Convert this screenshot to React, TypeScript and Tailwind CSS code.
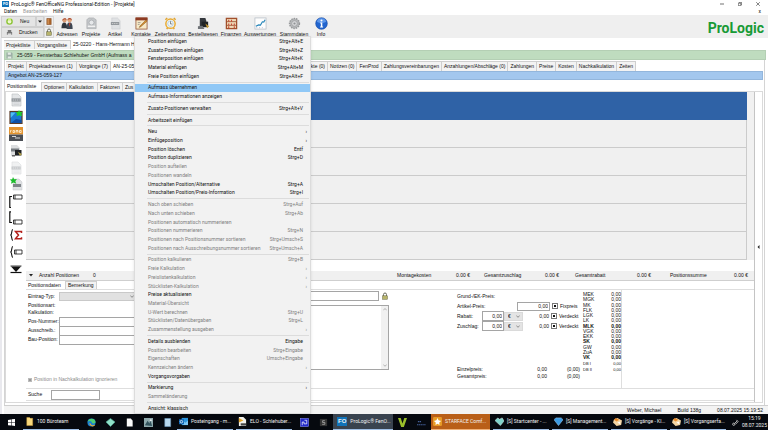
import { ReactNode } from 'react';
import clsx from 'clsx';

type MenuEntry = { label: string; keys?: string; off?: boolean; sub?: boolean; active?: boolean } | null;

const menu: MenuEntry[] = [
  { label: 'Position einfügen', keys: 'Strg+Alt+E' },
  { label: 'Zusatz-Position einfügen', keys: 'Strg+Alt+Z' },
  { label: 'Fensterposition einfügen', keys: 'Strg+Alt+K' },
  { label: 'Material einfügen', keys: 'Strg+Alt+M' },
  { label: 'Freie Position einfügen', keys: 'Strg+Alt+F' },
  null,
  { label: 'Aufmass übernehmen', active: true },
  { label: 'Aufmass-Informationen anzeigen' },
  null,
  { label: 'Zusatz-Positionen verwalten', keys: 'Strg+Alt+V' },
  null,
  { label: 'Arbeitszeit einfügen' },
  null,
  { label: 'Neu', sub: true },
  { label: 'Einfügeposition', sub: true },
  { label: 'Position löschen', keys: 'Entf' },
  { label: 'Position duplizieren', keys: 'Strg+D' },
  { label: 'Position aufteilen', off: true },
  { label: 'Positionen wandeln', off: true },
  { label: 'Umschalten Position/Alternative', keys: 'Strg+A' },
  { label: 'Umschalten Position/Preis-Information', keys: 'Strg+I' },
  null,
  { label: 'Nach oben schieben', keys: 'Strg+Auf', off: true },
  { label: 'Nach unten schieben', keys: 'Strg+Ab', off: true },
  { label: 'Positionen automatisch nummerieren', off: true },
  { label: 'Positionen nummerieren', keys: 'Strg+N', off: true },
  { label: 'Positionen nach Positionsnummer sortieren', keys: 'Strg+Umsch+S', off: true },
  { label: 'Positionen nach Ausschreibungsnummer sortieren', keys: 'Strg+Umsch+A', off: true },
  null,
  { label: 'Position kalkulieren', keys: 'Strg+B', off: true },
  { label: 'Freie Kalkulation', sub: true, off: true },
  { label: 'Preislistenkalkulation', sub: true, off: true },
  { label: 'Stücklisten-Kalkulation', sub: true, off: true },
  { label: 'Preise aktualisieren' },
  { label: 'Material-Übersicht', off: true },
  { label: 'U-Wert berechnen', keys: 'Strg+U', off: true },
  { label: 'Stücklisten/Datenübergaben', keys: 'Strg+L', off: true },
  { label: 'Zusammenstellung ausgeben', sub: true, off: true },
  null,
  { label: 'Details ausblenden', keys: 'Eingabe' },
  { label: 'Position bearbeiten', keys: 'Strg+Eingabe', off: true },
  { label: 'Eigenschaften', keys: 'Umsch+Eingabe', off: true },
  { label: 'Kennzeichen ändern', sub: true, off: true },
  { label: 'Vorgangsvorgaben' },
  null,
  { label: 'Markierung', sub: true },
  { label: 'Sammeländerung', off: true },
  null,
  { label: 'Ansicht: klassisch' },
];

const costs = ['MEK', 'MGK', 'MK', 'FLK', 'LGK', 'LK', 'MLK', 'VGK', 'EKK', 'SK', 'GW', 'ZuA', 'VK'];
const boldCosts = ['MLK', 'SK', 'VK'];

function Page({ className }: { className?: string }) {
  return (
    <svg viewBox="0 0 14 14" className={clsx('h-[14px] w-[14px]', className)}>
      <path d="M3 1h6l3 3v9H3z" fill="#e3e5e7" stroke="#b9bcc0" strokeWidth=".6" />
      <path d="M2.6 5.4h9v3.2h-9z" fill="#8b9095" />
      <path d="M3.6 7h7" stroke="#d8dadc" strokeWidth=".9" strokeDasharray="1.4 .6" />
      <path d="M4.5 10h6M4.5 11.5h6" stroke="#c3c6c9" strokeWidth=".5" />
    </svg>
  );
}

const toolIcons: { label: string; art: ReactNode }[] = [
  {
    label: 'Adressen',
    art: (
      <>
        <path d="M.5 12c0-4 1-6 3-6s3 2 3.2 6z" fill="#2e343c" />
        <path d="M6 13c0-5 1-7 3.3-7s3.2 2 3.2 7z" fill="#3d4652" />
        <path d="M8.4 6.6h1.8l-.9 4z" fill="#c8422e" />
        <circle cx="3.8" cy="3.8" r="2.2" fill="#d99b74" />
        <circle cx="9.3" cy="3.6" r="2.3" fill="#e0a57d" />
        <path d="M1.4 4C1 .8 6.4.4 6 3.2 4.5 2 3 2.4 1.4 4zM6.9 3.2c0-3 4.8-3 4.9 0-1.4-1.2-3.5-1.2-4.9 0z" fill="#a8452a" />
      </>
    ),
  },
  {
    label: 'Projekte',
    art: (
      <>
        <path d="M2 3l2-2h5l3 2v9.5H2z" fill="#c4c7ca" stroke="#9da1a5" strokeWidth=".6" />
        <circle cx="7" cy="6" r="2.7" fill="#e6e8ea" stroke="#9a9ea2" strokeWidth=".7" />
        <path d="M3 10h8" stroke="#f1f1f1" strokeWidth="1.5" />
      </>
    ),
  },
  {
    label: 'Artikel',
    art: (
      <>
        <path d="M3 1h6l3 3v9H3z" fill="#dfe1e3" stroke="#c2c5c8" strokeWidth=".5" />
        <path d="M2 5.5h9v3H2z" fill="#8b9095" />
        <path d="M3 7h7" stroke="#ddd" strokeWidth=".8" strokeDasharray="1.4 .6" />
      </>
    ),
  },
  {
    label: 'Kontakte',
    art: (
      <>
        <rect x="1" y="1" width="12" height="12" fill="#f6e9c8" stroke="#8d4a2a" strokeWidth=".8" />
        <path d="M.6.6h12.800v3H.6z" fill="#8d3a22" />
        <path d="M12 3L5.500 9.500l-1 1.700 1.800-.8L13 4.500z" fill="#d9912e" stroke="#5b3514" strokeWidth=".4" />
        <path d="M3 6h3M3 8h2" stroke="#6a6a6a" strokeWidth=".6" />
      </>
    ),
  },
  {
    label: 'Zeiterfassung',
    art: (
      <>
        <path d="M1.5 3l2-2M12.5 3l-2-2M3 13l1-2M11 13l-1-2" stroke="#e0a22d" strokeWidth="1.5" />
        <circle cx="7" cy="7.2" r="5" fill="#f3f6f4" stroke="#e9aa30" strokeWidth="1.6" />
        <circle cx="7" cy="7.2" r="3" fill="none" stroke="#9cc0d8" strokeWidth=".7" />
        <path d="M7 4.5v3h2" fill="none" stroke="#555" strokeWidth=".7" />
      </>
    ),
  },
  {
    label: 'Bestellwesen',
    art: (
      <>
        <path d="M3 1h6l1 3v6H3z" fill="#34383d" />
        <path d="M5 5h7v6H5z" fill="#202326" />
        <path d="M1 10l5-.500 2 3.500H1z" fill="#6f7378" />
        <path d="M9 7l4 3-2 2z" fill="#c79a31" />
      </>
    ),
  },
  {
    label: 'Finanzen',
    art: (
      <>
        <rect x="1.5" y="1.5" width="11" height="11" fill="#f0d9b8" stroke="#a2502c" strokeWidth="1.4" />
        <path d="M2 5h10M2 9h10" stroke="#8d4325" strokeWidth=".8" />
        <path d="M4 3v2M7 3v2M4 7v2M7 7v2M10 7v2M4 10v2M10 10v2" stroke="#c84a35" strokeWidth="1.2" />
      </>
    ),
  },
  {
    label: 'Auswertungen',
    art: (
      <>
        <rect x="1" y="1" width="12" height="12" fill="#fdfdfd" stroke="#b4bcc4" strokeWidth=".8" />
        <path d="M2 10l3-1.5 2 .2 2-3.500 1.500.3L12 3" fill="none" stroke="#2484b8" strokeWidth="1.2" />
        <path d="M3 12V11M6 12v-1M9 12v-1" stroke="#aac" strokeWidth=".8" />
      </>
    ),
  },
  {
    label: 'Stammdaten',
    art: (
      <>
        <circle cx="7" cy="7" r="5.3" fill="#b6b8ba" stroke="#96989a" strokeWidth="1.6" strokeDasharray="1.6 1" />
        <circle cx="7" cy="7" r="3" fill="#d7d8da" stroke="#8e9092" strokeWidth=".6" />
        <circle cx="7" cy="7" r="1.2" fill="#909294" />
      </>
    ),
  },
  {
    label: 'Info',
    art: (
      <>
        <circle cx="7" cy="7" r="6.3" fill="#2265cf" stroke="#1848a0" strokeWidth=".6" />
        <path d="M2 5a5.3 5.3 0 0 1 10 0c-3 2-7 2-10 0z" fill="#5d97ea" />
        <circle cx="7" cy="3.7" r="1.1" fill="#fff" />
        <path d="M5.6 6h2.300v4.200h.8v1H5.500v-1h.8V7h-.7z" fill="#fff" />
      </>
    ),
  },
];

const sideIcons: { name: string; art: ReactNode }[] = [
  { name: 'Artikel', art: <Page /> },
  {
    name: 'Fenster',
    art: (
      <svg viewBox="0 0 14 14" className="h-[14px] w-[14px]">
        <rect x="1" y="1.5" width="12" height="12" fill="#1b79d4" stroke="#5a3b26" strokeWidth="1.2" />
        <path d="M1.6 8l5-5.500H1.600z" fill="#4fc0f3" />
        <path d="M2 13l5-4 5.500 1v3z" fill="#0e4fa6" />
        <path d="M10 0l1.100 2.100 2.600-.3-1.500 2 1 2.400L10 5.300 7.400 6.200l.8-2.400L6.500 1.900l2.500.2z" fill="#20d02c" />
      </svg>
    ),
  },
  {
    name: 'Roma',
    art: (
      <svg viewBox="0 0 14 14" className="h-[14px] w-[14px]">
        <path d="M0 0h14v7.500H0z" fill="#e2932f" />
        <path d="M0 7.500h14V14H0z" fill="#4b4f55" />
        <path d="M1.500 5.500V3.500h1M4 3.500h1.500v2H4zM7 5.500v-2h1v2m0-2h1v2M10.500 3.500h1.700v2h-1.700z" fill="none" stroke="#fff4dc" strokeWidth=".8" />
        <path d="M3 9.500h4M6 11h5" stroke="#d4d6d8" />
      </svg>
    ),
  },
  {
    name: 'Bestellung',
    art: (
      <svg viewBox="0 0 14 14" className="h-[14px] w-[14px]">
        <path d="M2 1h6l3 3v8H2z" fill="#dcdee0" />
        <path d="M2 4.500h8v3H2z" fill="#777c81" />
        <path d="M6 6h6.500v5.500H6z" fill="#1e2124" />
        <path d="M9 8l4 2-2 2z" fill="#b2a04b" />
        <path d="M3 11h3v1.500H3z" fill="#666" />
      </svg>
    ),
  },
  { name: 'Artikel kopieren', art: <Page className="opacity-50" /> },
  {
    name: 'Artikel neu',
    art: (
      <svg viewBox="0 0 14 14" className="h-[14px] w-[14px]">
        <path d="M4 2h6l3 3v8H4z" fill="#dfe1e3" stroke="#c2c5c8" strokeWidth=".5" />
        <path d="M4 7h8v3H4z" fill="#80858a" />
        <path d="M4 0l1.200 2.300 2.700-.2-1.600 2.100 1 2.500L4.400 5.600 2 6.700l.6-2.500L.8 2.400l2.400-.1z" fill="#1dbd2c" />
      </svg>
    ),
  },
  {
    name: 'Gruppe Anfang',
    art: (
      <svg viewBox="0 0 14 14" className="h-[14px] w-[14px]" fill="none" stroke="#111">
        <path d="M3 2.500H.8v11H2" strokeWidth="1.200" />
        <path d="M4.500 1h8.500v4H4.500zM6 1v4" strokeWidth=".8" />
      </svg>
    ),
  },
  {
    name: 'Gruppe Ende',
    art: (
      <svg viewBox="0 0 14 14" className="h-[14px] w-[14px]" fill="none" stroke="#111">
        <path d="M2 .8H.8v10.700H3" strokeWidth="1.200" />
        <path d="M4.500 9h8.500v4H4.500zM6 9v4" strokeWidth=".8" />
      </svg>
    ),
  },
  {
    name: 'Summe',
    art: (
      <svg viewBox="0 0 14 14" className="h-[14px] w-[14px]" fill="none">
        <path d="M4 1.500C2 1.500 3.500 6.500 1.500 7c2 .5.5 5.500 2.500 5.500" stroke="#111" strokeWidth="1.100" />
        <path d="M12.500 5V3.500H6.500L9.500 7l-3 3.800h6V9.300" stroke="#b3201c" strokeWidth="1.500" />
      </svg>
    ),
  },
  {
    name: 'Klammer',
    art: (
      <svg viewBox="0 0 14 14" className="h-[14px] w-[14px]" fill="none" stroke="#111">
        <path d="M4 1.500C2 1.500 3.500 6.500 1.500 7c2 .5.5 5.500 2.500 5.500" strokeWidth="1.100" />
        <path d="M5.500 5h7.500v4H5.500zM7 5v4" strokeWidth=".8" />
      </svg>
    ),
  },
  {
    name: 'Nach unten',
    art: (
      <svg viewBox="0 0 14 14" className="h-[14px] w-[14px]">
        <path d="M1.500 4h11" stroke="#111" strokeWidth=".8" />
        <path d="M7 10L2 4.500h10z" fill="#111" />
        <path d="M1.500 10.500h11" stroke="#111" strokeWidth="1.200" />
      </svg>
    ),
  },
];

function Tab({ children, className, active }: { children: ReactNode; className?: string; active?: boolean }) {
  return (
    <button
      className={clsx(
        'shrink-0 overflow-hidden whitespace-nowrap border-r border-[#cfcfcf] px-[2px] text-left',
        active ? 'bg-white' : 'border-t bg-[#f3f3f3]',
        className,
      )}
    >
      {children}
    </button>
  );
}

function Lock() {
  return (
    <svg viewBox="0 0 8 8" className="h-2 w-2">
      <path d="M2.500 4V2.500a1.500 1.500 0 0 1 3 0V4" fill="none" stroke="#6b6b5c" />
      <rect x="1.500" y="3.800" width="5" height="3.500" fill="#b7b46a" stroke="#6b6b4c" strokeWidth=".5" />
    </svg>
  );
}

function ContextMenu() {
  return (
    <div
      role="menu"
      className="absolute top-9 bottom-4 left-[134px] z-10 flex w-[177px] flex-col border border-[#dcdcdc] bg-[#f2f2f2] font-['Roboto',sans-serif] shadow-sm"
    >
      {menu.map((m, i) =>
        m ? (
          <button
            key={i}
            role="menuitem"
            disabled={m.off}
            className={clsx(
              'flex min-h-0 flex-1 items-center pr-[3px] pl-[13px] text-[5px] leading-none',
              m.active && 'bg-[#90c8f6]',
              m.off ? 'text-[#808080]' : 'text-[#111]',
            )}
          >
            <span className="whitespace-nowrap">{m.label}</span>
            <span className="ml-auto whitespace-nowrap">{m.keys}</span>
            <span className="w-[4px] text-right">{m.sub ? '›' : ''}</span>
          </button>
        ) : (
          <div key={i} className="flex h-[3px] items-center pr-px pl-[12px]">
            <div className="h-px w-full bg-[#dcdcdc]" />
          </div>
        ),
      )}
    </div>
  );
}

function Field({ id, label }: { id: string; label: string }) {
  return (
    <div className="flex h-[9px] items-center">
      <label htmlFor={id} className="w-[31px] whitespace-nowrap">{label}</label>
      <input id={id} className="h-[10px] min-w-0 flex-1 border border-[#a5a5a5] bg-white px-1" />
    </div>
  );
}

function Check({ label }: { label: string }) {
  return (
    <label className="ml-[2px] flex items-center gap-[2px]">
      <input type="checkbox" className="h-[6px] w-[6px] appearance-none border border-[#777] bg-[#111] ring-1 ring-white ring-inset" />
      {label}
    </label>
  );
}

function PriceRow({ label, check }: { label: string; check: string }) {
  return (
    <div className="flex h-[10px] items-center">
      <label htmlFor={label} className="w-[25px]">{label}:</label>
      <input id={label} defaultValue="0,00" className="h-[10px] w-[22px] border border-[#a5a5a5] bg-white pr-px text-right" />
      <div className="relative flex items-center">
        <select aria-label={label + ' Einheit'} className="h-[9px] w-[19px] appearance-none border border-[#dadada] bg-[#e4e4e4] pl-[3px]">
          <option>€</option>
        </select>
        <svg viewBox="0 0 4 3" className="pointer-events-none absolute right-[3px] h-[3px] w-[4px]">
          <path d="M.3.5L2 2.300 3.700.5" fill="none" stroke="#555" strokeWidth=".6" />
        </svg>
      </div>
      <span className="w-[26px] text-right">0,00</span>
      <Check label={check} />
    </div>
  );
}

const taskIcons: Record<string, ReactNode> = {
  folder: <path d="M2 .5h3l1 1h2.500v8H2z" fill="#f6d77c" stroke="#d9a63c" strokeWidth=".5" />,
  edge: (
    <>
      <circle cx="5" cy="5" r="4.500" fill="#1b82d1" />
      <path d="M.6 4.500C1.500-.5 9-.5 9.500 4.500 9 6.500 6 6.500 5.500 5 4 2.500 1.500 3 .6 4.500z" fill="#4fce74" />
      <path d="M3 6c1 3 4 3.200 5.500 2" stroke="#f3b02f" strokeWidth="1.200" fill="none" />
    </>
  ),
  gem: <path d="M0 4.500L5 .5l5 4-5 5z" fill="#8fe0c8" stroke="#4fa893" strokeWidth=".7" />,
  file: <path d="M2 .5h4.500L8.500 3v6.500H2z" fill="#fafafa" />,
  pic: (
    <>
      <rect width="10" height="10" fill="#8fa9ad" />
      <path d="M1 8l3-5 2 3 1-4 2 7z" fill="#33535d" />
      <circle cx="7.500" cy="2.500" r="1.200" fill="#e9eef0" />
    </>
  ),
  note: <path d="M2 .5h6.500v9H2z" fill="#b8d8ee" stroke="#6f9fc6" strokeWidth=".6" />,
  outlook: (
    <>
      <path d="M3 1h7v8H3z" fill="#2c95dd" />
      <path d="M4 4l3 2.500L10 4v5H4z" fill="#7cc6f4" />
      <rect y="2.500" width="5.500" height="5.500" fill="#0d64b4" />
      <circle cx="2.700" cy="5.200" r="1.400" fill="none" stroke="#fff" strokeWidth=".8" />
    </>
  ),
  elo: (
    <>
      <path d="M1 0h5l3 3v7H1z" fill="#f2f2ec" />
      <path d="M1 1l5 3-5 2z" fill="#e3a52b" />
      <path d="M3 7h6v2.500H3z" fill="#444" />
    </>
  ),
  blue: (
    <>
      <rect x=".5" y=".5" width="9" height="9" fill="#2128c9" stroke="#8d92ff" strokeWidth=".6" />
      <path d="M2.500 8V4.500h2v2h3V2.500H5" fill="none" stroke="#fff" strokeWidth=".8" />
    </>
  ),
  dark: (
    <>
      <rect x="1" y="1" width="8" height="8" fill="#333" />
      <path d="M6.500 3H4v2h2.500v2H3.500" fill="none" stroke="#aaa" strokeWidth=".9" />
    </>
  ),
  vee: <path d="M0 0h3l2 6 2-6h3L6.500 10h-3z" fill="#9bbf2b" />,
  dots: <path d="M0 7.500h10M1 4h4" stroke="#46629c" strokeWidth="1.200" strokeDasharray="1.500 .5" />,
  star: (
    <>
      <rect width="10" height="10" rx="1.500" fill="#e79a25" />
      <path d="M5 1l1.200 2.500L9 4.500 7 6.200 7.200 9 5 7.500 2.800 9 3 6.200 1 4.500l2.800-1z" fill="#fff" />
    </>
  ),
  tealGem: <path d="M0 4l3-3 2 1.500L8 1l2 3.500L6 9.500z" fill="#7fd3cb" stroke="#d6f2ee" strokeWidth=".6" />,
  blueGem: <path d="M0 3l2-2h6l2 2-5 6.500z" fill="#3b9be4" stroke="#9cd0f8" strokeWidth=".6" />,
  box: (
    <>
      <path d="M1 3l4-2 5 3-1 5-5 1-4-4z" fill="#f3d5a2" />
      <path d="M3 1l4 2-3 2-3-2z" fill="#e78a2c" />
      <path d="M5 6l3-1v3z" fill="#fff" />
    </>
  ),
};

function Task({ icon, label, className }: { icon: string; label?: string; className?: string }) {
  return (
    <button
      aria-label={label ? undefined : icon}
      className={clsx(
        'flex h-full shrink-0 items-center gap-[3px] overflow-hidden',
        label ? 'mr-[3px] border-b border-[#9fbfe6] pl-[2px]' : 'w-[19px] justify-center',
        className ?? (label && 'w-[56px]'),
      )}
    >
      <svg viewBox="0 0 10 10" className="h-[9px] w-[9px] shrink-0">{taskIcons[icon]}</svg>
      {label && <span className="whitespace-nowrap">{label}</span>}
    </button>
  );
}

function Taskbar() {
  return (
    <footer className="flex h-4 items-stretch bg-[#06090f] font-['Roboto',sans-serif] text-[5px] text-[#f2f2f2]">
      <button aria-label="Start" className="flex w-[23px] items-center justify-center">
        <svg viewBox="0 0 8 8" className="h-[7px] w-[7px]" fill="#fff">
          <path d="M0 1l3.600-.5v3.200H0zM4.200.4L8 0v3.700H4.200zM0 4.300h3.600v3.200L0 7zM4.200 4.300H8V8l-3.800-.5z" />
        </svg>
      </button>
      <Task icon="folder" label="100 Büroteam" />
      <Task icon="edge" />
      <Task icon="gem" />
      <Task icon="file" />
      <Task icon="pic" />
      <Task icon="note" />
      <Task icon="outlook" label="Posteingang - m..." />
      <Task icon="elo" label="ELO - Schlehuber..." />
      <Task icon="blue" />
      <Task icon="dark" />
      <button className="flex w-[60px] shrink-0 items-center gap-[3px] border-b border-[#9fbfe6] bg-[#39434f] pl-[4px]">
        <span className="bg-[#1173b9] px-px font-['Liberation_Sans',sans-serif] text-[6px] leading-[9px] font-bold">FO</span>
        <span className="whitespace-nowrap">ProLogic® FenO...</span>
      </button>
      <Task icon="vee" />
      <Task icon="dots" />
      <Task icon="star" label="STARFACE Comf..." className="w-[59px] border-[#f0b27a] bg-[#b95f18]" />
      <Task icon="tealGem" label="[S] Startcenter - ..." />
      <Task icon="blueGem" label="[S] Management..." />
      <Task icon="box" label="[S] Vorgänge - Kl..." />
      <Task icon="box" label="[S] Vorgangserfa..." />
      <div className="ml-auto flex items-center gap-[3px] pr-px">
        <svg viewBox="0 0 8 8" className="h-[7px] w-[7px]" fill="none" stroke="#ddd" strokeWidth=".9">
          <circle cx="2" cy="6" r="1.300" />
          <path d="M3 5l3-3M4 6l3-3M5 1l2 2" />
        </svg>
        <div className="text-center leading-[7px]">
          <div>15:19</div>
          <div>08.07.2025</div>
        </div>
      </div>
    </footer>
  );
}

export default function App() {
  return (
    <div className="relative flex min-h-screen flex-col overflow-hidden bg-white font-['Liberation_Sans',sans-serif] text-[5px] leading-[7px] text-[#111]">
      <header>
        <div className="flex h-2 items-center px-[2px] font-['Roboto',sans-serif]">
          <span className="mr-[2px] bg-[#1173b9] px-px text-[4px] leading-[6px] font-bold text-white">FO</span>
          <span>ProLogic® FenOfficeNG Professional-Edition - [Projekte]</span>
          <div className="ml-auto flex gap-[14px] pr-[6px]">
            <button aria-label="Minimieren">
              <svg viewBox="0 0 4 4" className="h-[4px] w-[4px]"><path d="M0 2h4" stroke="#333" strokeWidth=".7" /></svg>
            </button>
            <button aria-label="Wiederherstellen">
              <svg viewBox="0 0 4 4" className="h-[4px] w-[4px]" fill="none" stroke="#333" strokeWidth=".6"><path d="M.3 1.200h2.500v2.500H.3zM1.200 1V.3h2.500v2.500H3" /></svg>
            </button>
            <button aria-label="Schließen">
              <svg viewBox="0 0 4 4" className="h-[4px] w-[4px]"><path d="M.2.2l3.600 3.600M3.800.2L.2 3.800" stroke="#333" strokeWidth=".6" /></svg>
            </button>
          </div>
        </div>
        <nav className="flex h-[7px] items-center gap-[6px] px-1 font-['Roboto',sans-serif]">
          <button>Daten</button>
          <button disabled className="text-[#9a9a9a]">Bearbeiten</button>
          <button>Hilfe</button>
          <button aria-label="Projekte schließen" className="ml-auto pr-[3px]">x</button>
        </nav>
        <div className="flex h-[23px] items-center bg-[#efefef] pl-px">
          <div className="w-[54px]">
            <div className="flex h-[11px]">
              <button className="flex w-[35px] items-center gap-[7px] border border-[#cfcfcf] bg-[#e4e4e4] pl-1">
                <svg viewBox="0 0 8 8" className="h-[7px] w-[7px]">
                  <circle cx="4" cy="4" r="3" fill="#eef7cf" stroke="#8cc437" strokeWidth="1.600" />
                  <path d="M2.500 0h3v3h-3z" fill="#d3ef8a" />
                </svg>
                Neu
              </button>
              <button aria-label="Neu Auswahl" className="flex w-[8px] items-center justify-center border border-[#cfcfcf] bg-[#e4e4e4]">
                <svg viewBox="0 0 4 3" className="h-[3px] w-[4px]"><path d="M0 .5h4L2 2.800z" fill="#222" /></svg>
              </button>
              <button aria-label="Beenden" className="flex w-[10px] items-center justify-center border border-[#d8d8d8]">
                <svg viewBox="0 0 6 8" className="h-[7px] w-[6px]"><path d="M.5.5h5v7h-5z" fill="#b0682c" stroke="#7c4318" strokeWidth=".6" /><path d="M2 1v6" stroke="#e0a66b" /></svg>
              </button>
            </div>
            <div className="flex h-[11px]">
              <button className="flex w-[43px] items-center gap-[6px] border border-[#cfcfcf] bg-[#e4e4e4] pl-1">
                <svg viewBox="0 0 8 8" className="h-[7px] w-[7px]">
                  <path d="M2 1h4v2.500H2zM1 3.500h6v3H1z" fill="#777" />
                  <path d="M2 5h4v2H2z" fill="#ddd" />
                </svg>
                Drucken
              </button>
              <button aria-label="Sperren" className="flex w-[10px] items-center justify-center border border-[#d8d8d8]"><Lock /></button>
            </div>
          </div>
          <div className="grid grid-cols-[24px_24px_24px_28px_30px_36px_20px_38px_30px_24px] pt-px">
            {toolIcons.map((t) => (
              <button key={t.label} className="flex flex-col items-center gap-px">
                <svg viewBox="0 0 14 14" className="h-[13px] w-[13px]">{t.art}</svg>
                <span className="whitespace-nowrap">{t.label}</span>
              </button>
            ))}
          </div>
          <div className="ml-auto pt-[2px] pr-1 font-['Roboto',sans-serif] text-[14px] leading-none font-bold text-[#189a35]">ProLogic</div>
        </div>
      </header>

      <main className="flex flex-1 flex-col border-l-2 border-[#e9e9ee] pl-[2px]">
        <div className="flex h-[11px] items-stretch pt-[2px]">
          <Tab className="w-[31px]">Projektliste</Tab>
          <Tab className="w-[36px]">Vorgangsliste</Tab>
          <Tab active>25-0220 - Hans-Hermann H</Tab>
        </div>
        <div className="mt-px mr-[2px] flex h-[10px] items-center gap-[4px] border border-[#b4cfb4] bg-[#bfdcbf] pl-px">
          <svg viewBox="0 0 8 8" className="h-[7px] w-[7px]"><path d="M.5.5h6l1 1v6h-7z" fill="#9dafa6" /><path d="M2 .5h3.500V3H2zM2 5h4v2.500H2z" fill="#e3ebe5" /></svg>
          25-059 - Fensterbau Schlehuber GmbH (Aufmass a
        </div>
        <div className="mr-[3px] flex flex-1 flex-col border-x border-[#d4d4d4] pr-px">
          <div className="mt-px flex h-[10px] items-stretch pl-px">
            <Tab className="w-[21px]">Projekt</Tab>
            <Tab className="w-[50px]">Projektadressen (1)</Tab>
            <Tab className="w-[34px]">Vorgänge (7)</Tab>
            <Tab active className="w-[181px]">AN-25-05</Tab>
            <Tab className="w-[36px] text-right">kte (0)</Tab>
            <Tab>Notizen (0)</Tab>
            <Tab>FenProd</Tab>
            <Tab>Zahlungsvereinbarungen</Tab>
            <Tab>Anzahlungen/Abschläge (0)</Tab>
            <Tab>Zahlungen</Tab>
            <Tab>Preise</Tab>
            <Tab>Kosten</Tab>
            <Tab>Nachkalkulation</Tab>
            <Tab>Zeiten</Tab>
          </div>
          <div className="flex h-[9px] items-center border border-[#93b6dc] bg-[#a3c7ee] pl-[2px]">Angebot AN-25-059-127</div>
          <div className="flex h-[11px] items-stretch pt-[2px]">
            <Tab active className="w-[37px]">Positionsliste</Tab>
            <Tab className="w-[25px]">Optionen</Tab>
            <Tab className="w-[31px]">Kalkulation</Tab>
            <Tab className="w-[25px]">Faktoren</Tab>
            <Tab>Zus</Tab>
          </div>

          <div className="mb-[2px] flex flex-1 border border-[#dadada]">
            <aside className="flex h-[184px] w-5 shrink-0 flex-col items-center justify-between pt-px">
              {sideIcons.map((s) => (
                <button key={s.name} aria-label={s.name}>{s.art}</button>
              ))}
            </aside>

            <section className="flex min-w-0 flex-1 flex-col border-r border-[#c4c4c4]">
              <div className="border-r-[7px] border-[#f1f1f1]">
                <div className="h-7 bg-[#2f62a6]" />
                {[0, 1, 2, 3, 4].map((r) => (
                  <div key={r} className="h-7 border-r border-b border-[#cbcbcb] bg-[#f0f0f0]" />
                ))}
              </div>

              <div className="mt-[11px] flex h-[10px] items-center border-b border-[#cfcfcf] bg-[#f0f0f0] pr-[6px] pl-[3px]">
                <svg viewBox="0 0 4 3" className="h-[3px] w-[4px]"><path d="M0 0h4L2 2.500z" fill="#222" /></svg>
                <span className="ml-[6px] w-[54px]">Anzahl Positionen</span>
                <span>0</span>
                <dl className="ml-auto grid grid-cols-[38px_35px_52px_37px_53px_39px_58px_39px] whitespace-nowrap">
                  <dt>Montagekosten</dt><dd className="text-right">0.00 €</dd>
                  <dt className="pl-[14px]">Gesamtzuschlag</dt><dd className="text-right">0.00 €</dd>
                  <dt className="pl-[16px]">Gesamtrabatt</dt><dd className="text-right">0.00 €</dd>
                  <dt className="pl-[19px]">Positionssumme</dt><dd className="text-right">0.00 €</dd>
                </dl>
              </div>

              <div className="flex h-2 items-stretch">
                <Tab active className="w-[40px]">Positionsdaten</Tab>
                <Tab>Bemerkung</Tab>
              </div>

              <div className="flex h-[100px] border-y border-[#dedede] pl-[2px]">
                <div className="flex w-[120px] flex-col pt-px">
                  <div className="flex h-[10px] items-center">
                    <label htmlFor="typ" className="w-[31px]">Eintrag-Typ:</label>
                    <div className="relative flex flex-1 items-center">
                      <select id="typ" className="h-[9px] w-full appearance-none border border-[#c9c9c9] bg-[#e1e1e1]"><option></option></select>
                      <svg viewBox="0 0 4 3" className="pointer-events-none absolute right-[14px] h-[3px] w-[4px]"><path d="M.3.500L2 2.300 3.700.5" fill="none" stroke="#555" strokeWidth=".6" /></svg>
                    </div>
                  </div>
                  <div className="pt-px">Positionsart:</div>
                  <div className="pb-px">Kalkulation:</div>
                  <Field id="pos" label="Pos-Nummer:" />
                  <Field id="aus" label="Ausschreib.:" />
                  <Field id="bau" label="Bau-Position:" />
                  <label className="mt-auto mb-[5px] flex items-center gap-[2px] whitespace-nowrap text-[#8c8c8c]">
                    <input type="checkbox" disabled className="h-[4px] w-[4px] appearance-none border border-[#bbb] bg-[#999]" />
                    Position in Nachkalkulation ignorieren
                  </label>
                </div>

                <div className="flex w-[241px] flex-col pt-px">
                  <div className="flex items-center gap-[2px]">
                    <input aria-label="Bezeichnung" className="h-[10px] w-[231px] border border-[#a5a5a5] px-1" />
                    <Lock />
                  </div>
                  <div className="relative mt-[4px] flex">
                    <textarea aria-label="Beschreibung" className="h-[65px] w-full resize-none border border-[#a5a5a5] px-1" />
                    <div className="absolute top-px right-px bottom-px flex w-[7px] flex-col items-center justify-between bg-[#f1f1f1] py-[2px]">
                      <svg viewBox="0 0 4 3" className="h-[3px] w-[4px]"><path d="M.3 2.300L2 .5l1.700 1.800" fill="none" stroke="#999" strokeWidth=".7" /></svg>
                      <svg viewBox="0 0 4 3" className="h-[3px] w-[4px]"><path d="M.3.500L2 2.300 3.700.5" fill="none" stroke="#999" strokeWidth=".7" /></svg>
                    </div>
                  </div>
                </div>

                <div className="ml-[68px] flex w-[126px] flex-col pt-[3px]">
                  <div>Grund-/EK-Preis:</div>
                  <div className="mt-px flex h-[10px] items-center">
                    <label htmlFor="artikel" className="w-[60px]">Artikel-Preis:</label>
                    <input id="artikel" defaultValue="0,00" className="h-[9px] w-[33px] border border-[#a5a5a5] pr-px text-right" />
                    <Check label="Fixpreis" />
                  </div>
                  <PriceRow label="Rabatt" check="Verdeckt" />
                  <PriceRow label="Zuschlag" check="Verdeckt" />
                  <div className="mt-auto mb-[8px] grid grid-cols-[60px_30px_33px] text-right">
                    <span className="text-left">Einzelpreis:</span><span>0,00</span><span>(0,00)</span>
                    <span className="text-left">Gesamtpreis:</span><span>0,00</span><span>(0,00)</span>
                  </div>
                </div>

                <div className="w-[39px] border-r border-[#dedede]">
                  <dl className="mt-[2px] flex h-[68px] flex-col justify-between leading-[5px]">
                    {costs.map((c) => (
                      <div key={c} className={clsx('flex justify-between', boldCosts.includes(c) && 'font-bold')}>
                        <dt>{c}</dt>
                        <dd>0,00</dd>
                      </div>
                    ))}
                  </dl>
                  <dl className="mt-px text-[4px] leading-[6px]">
                    <div className="flex justify-between"><dt>DB I</dt><dd>0,00</dd></div>
                    <div className="flex justify-between"><dt>DB II</dt><dd>0,00</dd></div>
                  </dl>
                </div>
              </div>

              <div className="flex h-[12px] items-center border-b border-[#dedede] pl-[2px]">
                <label htmlFor="suche" className="w-[23px]">Suche</label>
                <input id="suche" className="h-[10px] w-[49px] border border-[#a5a5a5] px-1" />
              </div>
            </section>
            <button aria-label="Seitenleiste öffnen" className="flex w-[7px] items-center justify-center">
              <svg viewBox="0 0 3 4" className="h-[4px] w-[3px]"><path d="M2.500 0v4L.5 2z" fill="#222" /></svg>
            </button>
          </div>
        </div>
        <div className="flex h-[9px] items-center justify-end gap-[16px] border-t border-[#cfcfcf] bg-[#f3f3f3] pr-[5px]">
          <span>Weber, Michael</span>
          <span>Build 138g</span>
          <span>08.07.2025 15:19:52</span>
        </div>
      </main>
      <Taskbar />
      <ContextMenu />
    </div>
  );
}
